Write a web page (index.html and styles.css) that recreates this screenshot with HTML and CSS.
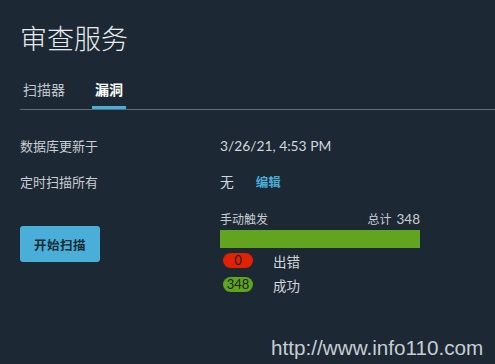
FILE: index.html
```html
<!DOCTYPE html>
<html lang="zh">
<head>
<meta charset="utf-8">
<link rel="stylesheet" href="styles.css">
</head>
<body>
<div class="page">
  <h1 class="title">审查服务</h1>
  <nav class="tabs">
    <span class="tab">扫描器</span>
    <span class="tab active">漏洞</span>
  </nav>
  <div class="row">
    <div class="label">数据库更新于</div>
    <div class="value">3/26/21, 4:53 PM</div>
  </div>
  <div class="row">
    <div class="label">定时扫描所有</div>
    <div class="value">无<a class="edit">编辑</a></div>
  </div>
  <div class="lower">
    <div class="left">
      <button class="btn">开始扫描</button>
    </div>
    <div class="chart">
      <div class="chart-head">
        <span>手动触发</span>
        <span>总计 <span class="num">348</span></span>
      </div>
      <div class="bar"></div>
      <div class="legend">
        <div class="item"><span class="badge red">0</span><span class="item-label">出错</span></div>
        <div class="item"><span class="badge green">348</span><span class="item-label">成功</span></div>
      </div>
    </div>
  </div>
</div>
<div class="watermark">http://www.info110.com</div>
</body>
</html>
```
FILE: styles.css
```css
html, body {
  margin: 0;
  padding: 0;
  background: #1c2833;
  width: 495px;
  height: 364px;
  overflow: hidden;
}
body {
  position: relative;
  font-family: "Lato", "Noto Sans CJK SC", sans-serif;
  color: #c9ced3;
}
.page {
  padding: 18px 0 0 20px;
}
.title {
  margin: 0;
  font-size: 27px;
  font-weight: 300;
  line-height: 40px;
  color: #e8ebee;
  font-family: "Noto Sans CJK SC", sans-serif;
}
.tabs {
  display: flex;
  gap: 24px;
  margin-top: 21px;
  border-bottom: 1px solid #5d6d78;
  height: 30px;
  align-items: flex-start;
}
.tab {
  font-size: 14px;
  line-height: 20px;
  padding: 0 3px;
  height: 29px;
  box-sizing: border-box;
  color: #c0c6cc;
  font-family: "Noto Sans CJK SC", sans-serif;
}
.tab.active {
  color: #ffffff;
  font-weight: 700;
  border-bottom: 3px solid #49afd9;
  height: 30px;
  margin-bottom: -1px;
}
.row {
  display: flex;
  align-items: center;
  height: 36px;
  font-size: 13px;
}
.tabs + .row { margin-top: 17px; }
.label {
  width: 200px;
  color: #c9ced3;
}
.value {
  color: #d3d7db;
  font-size: 13.8px;
}
.edit {
  color: #49afd9;
  font-weight: 700;
  margin-left: 22px;
  font-size: 12.5px;
}
.lower {
  display: flex;
  margin-top: 13px;
}
.left {
  width: 200px;
  padding-top: 14px;
}
.btn {
  width: 80px;
  height: 36px;
  border: none;
  border-radius: 3px;
  background: #49afd9;
  color: #1a2a33;
  font-family: "Noto Sans CJK SC", sans-serif;
  font-size: 12.5px;
  font-weight: 700;
  letter-spacing: 0.5px;
  padding: 0;
}
.chart {
  width: 200px;
}
.chart-head {
  display: flex;
  justify-content: space-between;
  align-items: baseline;
  font-size: 12px;
  line-height: 14px;
  color: #c9ced3;
}
.num {
  font-size: 13.5px;
  margin-left: 2px;
}
.bar {
  height: 18px;
  background: #62a420;
  margin-top: 3px;
}
.legend {
  display: flex;
  flex-direction: column;
  gap: 9px;
  margin-top: 5px;
}
.item {
  display: flex;
  align-items: center;
  height: 15px;
}
.badge {
  width: 30px;
  height: 15px;
  border-radius: 8px;
  margin-left: 3px;
  font-size: 13px;
  line-height: 15px;
  text-align: center;
  color: #1c1c1c;
}
.badge.red { background: #e12200; }
.badge.green { background: #5ea51c; }
.item-label {
  margin-left: 20px;
  font-size: 13.5px;
  color: #d3d7db;
}
.watermark {
  position: absolute;
  left: 271px;
  top: 336px;
  font-family: "Liberation Sans", sans-serif;
  font-size: 20.7px;
  line-height: 24px;
  color: #c8cdd2;
}
```
